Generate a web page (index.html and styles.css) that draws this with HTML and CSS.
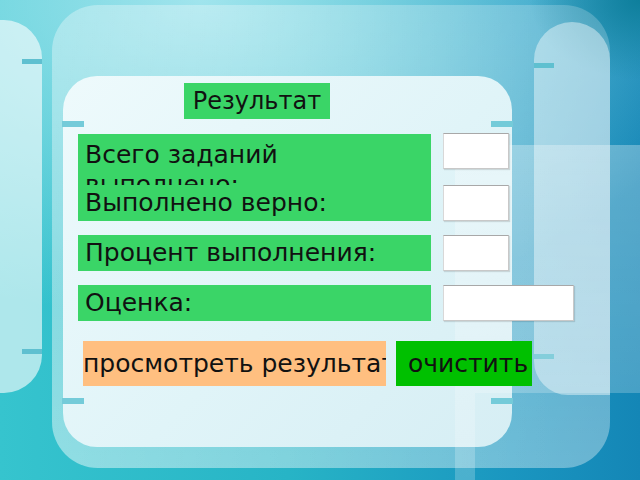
FILE: index.html
```html
<!DOCTYPE html>
<html lang="ru">

<head>
    <meta charset="UTF-8">
    <meta name="viewport" content="width=device-width, initial-scale=1.0">
    <title>Результат</title>
    <link rel="stylesheet" href="styles.css">
</head>

<body>
    <div class="slide">
        <!-- decorative background shapes -->
        <div class="pillar pillar-left">
            <span class="tick tick-top"></span>
            <span class="tick tick-bottom"></span>
        </div>

        <div class="frame">
            <div class="pillar pillar-right">
                <span class="tick tick-top"></span>
                <span class="tick tick-bottom"></span>
            </div>

            <div class="sheet">
                <span class="mark mark-lt"></span>
                <span class="mark mark-lb"></span>
                <span class="mark mark-rt"></span>
                <span class="mark mark-rb"></span>

                <div class="content">
                    <div class="title">Результат</div>

                    <div class="rows">
                        <div class="row row-first">
                            <div class="label label-tall">Всего заданий выполнено:</div>
                            <input class="field" type="text" id="total">
                        </div>
                        <div class="row">
                            <div class="label">Выполнено верно:</div>
                            <input class="field" type="text" id="right">
                        </div>
                        <div class="row">
                            <div class="label">Процент выполнения:</div>
                            <input class="field" type="text" id="percent">
                        </div>
                        <div class="row row-last">
                            <div class="label">Оценка:</div>
                            <input class="field field-wide" type="text" id="mark">
                        </div>
                    </div>

                    <div class="buttons">
                        <button class="btn btn-show">просмотреть результат</button>
                        <button class="btn btn-clear">очистить</button>
                    </div>
                </div>
            </div>
        </div>

        <div class="glare"></div>
    </div>
</body>

</html>
```

FILE: styles.css
```css
/* General styling */
body {
    margin: 0;
    padding: 0;
    font-family: "DejaVu Sans", Verdana, sans-serif;
    color: #111;
}

.slide {
    position: relative;
    width: 640px;
    height: 480px;
    overflow: hidden;
    background:
        radial-gradient(ellipse 110px 80px at 640px 0, #0e7f9c, rgba(14, 127, 156, 0)),
        radial-gradient(ellipse 540px 320px at 200px 0, rgba(170, 232, 240, 0.92), rgba(170, 232, 240, 0)),
        linear-gradient(to right, #36c4ce 0%, #27b4c6 45%, #1a96c0 80%, #1486b6 100%);
}

/* Background panels */
.frame {
    position: absolute;
    left: 52px;
    top: 5px;
    width: 558px;
    height: 463px;
    border-radius: 46px;
    background:
        linear-gradient(to right, rgba(255, 255, 255, 0.16), rgba(255, 255, 255, 0) 90%),
        linear-gradient(to bottom, rgba(255, 255, 255, 0.2), rgba(255, 255, 255, 0.36));
    padding: 71px 0 0 11px;
    box-sizing: border-box;
}

.pillar {
    position: absolute;
    top: 20px;
    height: 373px;
    border-radius: 38px;
    background: rgba(255, 255, 255, 0.6);
}

.pillar-left {
    left: -36px;
    width: 78px;
}

.pillar-right {
    left: 482px;
    top: 17px;
    width: 76px;
    border-radius: 38px 38px 0 34px;
    background: rgba(255, 255, 255, 0.42);
}

.tick {
    position: absolute;
    width: 20px;
    height: 5px;
    background: #5fc0d0;
}

.pillar-left .tick {
    right: 0;
}

.pillar-right .tick {
    left: 0;
}

.pillar-left .tick-top {
    top: 39px;
}

.pillar-left .tick-bottom {
    top: 329px;
}

.pillar-right .tick-top {
    top: 41px;
}

.pillar-right .tick-bottom {
    top: 332px;
}

.sheet {
    position: relative;
    width: 449px;
    height: 371px;
    border-radius: 34px;
    background: linear-gradient(135deg, #eefafc 0%, #e0f4f8 55%, #d6eef4 100%);
}

.mark {
    position: absolute;
    width: 22px;
    height: 6px;
    background: #74cbd9;
}

.mark-lt,
.mark-lb {
    left: -1px;
}

.mark-rt,
.mark-rb {
    right: -1px;
}

.mark-lt,
.mark-rt {
    top: 45px;
}

.mark-lb,
.mark-rb {
    top: 322px;
}

.glare {
    position: absolute;
    left: 455px;
    top: 145px;
    right: 0;
    bottom: 0;
    border-top-left-radius: 24px;
    background:
        linear-gradient(rgba(255, 255, 255, 0.3), rgba(255, 255, 255, 0.22)) 0 0 / 100% 248px no-repeat,
        linear-gradient(rgba(255, 255, 255, 0.22), rgba(255, 255, 255, 0.18)) 0 248px / 20px 100% no-repeat;
    pointer-events: none;
}

/* Form */
.content {
    position: relative;
    z-index: 2;
    padding: 7px 0 0 15px;
}

.title {
    width: 146px;
    height: 36px;
    margin-left: 106px;
    line-height: 36px;
    font-size: 24px;
    text-align: center;
    background: #3ad567;
}

.rows {
    margin-top: 14px;
}

.row {
    display: flex;
    align-items: flex-start;
    gap: 12px;
    margin-bottom: 14px;
}

.row-first {
    margin-bottom: 0;
}

.row-last {
    margin-bottom: 0;
}

.label {
    flex-shrink: 0;
    width: 353px;
    height: 36px;
    padding: 0 7px;
    box-sizing: border-box;
    line-height: 36px;
    font-size: 25px;
    white-space: nowrap;
    overflow: hidden;
    background: #3ad567;
}

.label-tall {
    height: 51px;
    margin-top: 1px;
    padding-top: 6px;
    line-height: 30px;
    white-space: normal;
}

.field {
    flex-shrink: 0;
    width: 66px;
    height: 36px;
    margin: 0;
    padding: 0;
    box-sizing: border-box;
    border: 1px solid #c8c8c8;
    border-top-color: #a8a8a8;
    border-left-color: #d8d8d8;
    background: #fff;
    box-shadow: 1px 1px 1px rgba(0, 0, 0, 0.12);
    font-family: inherit;
    font-size: 20px;
}

.field-wide {
    width: 131px;
}

.buttons {
    display: flex;
    gap: 10px;
    margin: 20px 0 0 5px;
}

.btn {
    flex-shrink: 0;
    height: 45px;
    margin: 0;
    padding: 0;
    border: none;
    border-radius: 0;
    font-family: inherit;
    font-size: 25px;
    color: #111;
    text-align: left;
    white-space: nowrap;
    overflow: hidden;
    cursor: pointer;
}

.btn-show {
    width: 303px;
    background: #ffbf80;
}

.btn-clear {
    width: 136px;
    padding-left: 12px;
    background: #00c000;
}
```
